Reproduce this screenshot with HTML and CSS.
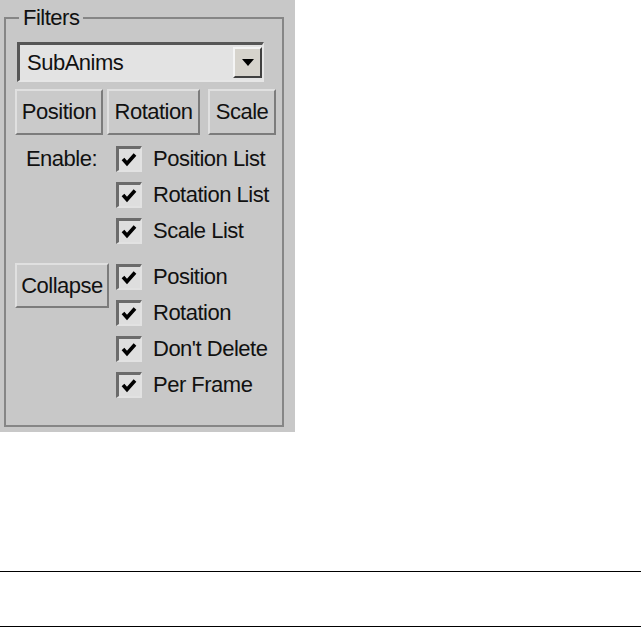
FILE: index.html
```html
<!DOCTYPE html>
<html>
<head>
<meta charset="utf-8">
<link rel="stylesheet" href="styles.css">
</head>
<body>
<div class="panel">
  <fieldset class="group">
    <legend>Filters</legend>
    <div class="content">
      <div class="select">
        <span>SubAnims</span>
        <span class="arrow"><svg width="12" height="7" viewBox="0 0 12 7"><path d="M0 0H12L6 7Z" fill="#000"/></svg></span>
      </div>
      <div class="btnrow">
        <div class="btn w-pos">Position</div>
        <div class="btn w-rot">Rotation</div>
        <div class="btn w-scale">Scale</div>
      </div>
      <div class="section sec-a">
        <div class="side"><span class="label">Enable:</span></div>
        <div class="checks">
          <div class="row"><span class="cb"><svg width="21" height="21" viewBox="0 0 21 21"><path d="M4 10L8 14.5L16 5.5" fill="none" stroke="#000" stroke-width="3.6"/></svg></span><span>Position List</span></div>
          <div class="row"><span class="cb"><svg width="21" height="21" viewBox="0 0 21 21"><path d="M4 10L8 14.5L16 5.5" fill="none" stroke="#000" stroke-width="3.6"/></svg></span><span>Rotation List</span></div>
          <div class="row"><span class="cb"><svg width="21" height="21" viewBox="0 0 21 21"><path d="M4 10L8 14.5L16 5.5" fill="none" stroke="#000" stroke-width="3.6"/></svg></span><span>Scale List</span></div>
        </div>
      </div>
      <div class="section sec-b">
        <div class="side"><div class="btn collapse">Collapse</div></div>
        <div class="checks">
          <div class="row"><span class="cb"><svg width="21" height="21" viewBox="0 0 21 21"><path d="M4 10L8 14.5L16 5.5" fill="none" stroke="#000" stroke-width="3.6"/></svg></span><span>Position</span></div>
          <div class="row"><span class="cb"><svg width="21" height="21" viewBox="0 0 21 21"><path d="M4 10L8 14.5L16 5.5" fill="none" stroke="#000" stroke-width="3.6"/></svg></span><span>Rotation</span></div>
          <div class="row"><span class="cb"><svg width="21" height="21" viewBox="0 0 21 21"><path d="M4 10L8 14.5L16 5.5" fill="none" stroke="#000" stroke-width="3.6"/></svg></span><span>Don't Delete</span></div>
          <div class="row"><span class="cb"><svg width="21" height="21" viewBox="0 0 21 21"><path d="M4 10L8 14.5L16 5.5" fill="none" stroke="#000" stroke-width="3.6"/></svg></span><span>Per Frame</span></div>
        </div>
      </div>
    </div>
  </fieldset>
</div>
<div class="rule"></div>
</body>
</html>
```
FILE: styles.css
```css
body {
  margin: 0;
  background: #fff;
  font-family: "Liberation Sans", Arial, sans-serif;
  font-size: 22px;
  letter-spacing: -0.5px;
  color: #111;
}
.panel {
  width: 295px;
  height: 432px;
  background: #c8c8c8;
  padding: 0 0 0 4px;
  box-sizing: border-box;
  overflow: hidden;
}
.group {
  margin: 5px 0 0 0;
  width: 280px;
  height: 422px;
  box-sizing: border-box;
  border: 2px solid #868686;
  padding: 0;
  min-width: 0;
}
.group legend {
  margin-left: 13px;
  padding: 0 4px;
  line-height: 26px;
  height: 26px;
}
.content {
  padding-left: 9px;
}
.select {
  margin: 11px 0 0 2px;
  width: 247px;
  height: 40px;
  box-sizing: border-box;
  border-style: solid;
  border-width: 3px 2px 2px 3px;
  border-color: #565656 #e6e6e6 #e6e6e6 #565656;
  background: #e3e3e3;
  display: flex;
  align-items: center;
  justify-content: space-between;
  padding-left: 7px;
}
.arrow {
  width: 29px;
  height: 31px;
  box-sizing: border-box;
  background: #d6d3cc;
  border: 2px solid;
  border-color: #f4f4f4 #404040 #404040 #f4f4f4;
  display: flex;
  align-items: center;
  justify-content: center;
}
.btnrow {
  margin-top: 7px;
  display: flex;
}
.btn {
  height: 46px;
  box-sizing: border-box;
  border: 2px solid;
  border-color: #e0e0e0 #7c7c7c #7c7c7c #e0e0e0;
  background: #cacaca;
  display: flex;
  align-items: center;
  justify-content: center;
}
.w-pos { width: 88px; }
.w-rot { width: 93px; margin-left: 4px; }
.w-scale { width: 68px; margin-left: 8px; }
.section {
  display: grid;
  grid-template-columns: 101px auto;
}
.sec-a { margin-top: 11px; }
.sec-b { margin-top: 20px; }
.side .label {
  display: block;
  text-align: right;
  padding-right: 19px;
  line-height: 26px;
}
.collapse {
  width: 94px;
  height: 45px;
  margin-top: -1px;
}
.checks {
  display: flex;
  flex-direction: column;
  gap: 10px;
}
.row {
  display: flex;
  align-items: center;
  gap: 11px;
  height: 26px;
}
.cb {
  width: 26px;
  height: 26px;
  box-sizing: border-box;
  border-style: solid;
  border-width: 3px 2px 2px 3px;
  border-color: #6b6b6b #e2e2e2 #e2e2e2 #6b6b6b;
  background: #dedede;
  display: flex;
  align-items: center;
  justify-content: center;
}
.rule {
  margin-top: 139px;
  height: 56px;
  box-sizing: border-box;
  border-top: 1px solid #000;
  border-bottom: 1px solid #000;
}
```
